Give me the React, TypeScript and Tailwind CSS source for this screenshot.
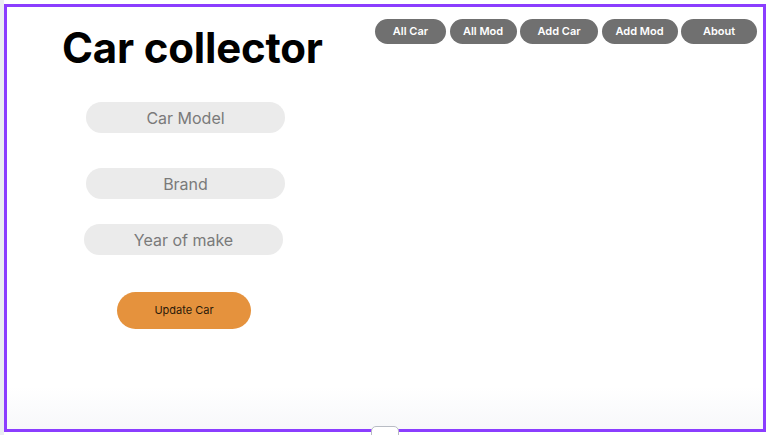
const navItems = [
  { label: "All Car", w: "w-[71px]" },
  { label: "All Mod", w: "w-[67px]" },
  { label: "Add Car", w: "w-[78px]" },
  { label: "Add Mod", w: "w-[76px]" },
  { label: "About", w: "w-[76px]" },
];

function Field({ label, offset }: { label: string; offset: string }) {
  return (
    <div
      className={`w-[199px] h-[31px] rounded-full bg-[#ebebeb] flex items-center justify-center text-[16px] text-[#7a7a7a] ${offset}`}
    >
      {label}
    </div>
  );
}

export default function App() {
  return (
    <div
      className="w-[767px] h-[435px] bg-white flex relative overflow-hidden"
      style={{ fontFamily: "Inter, 'Liberation Sans', sans-serif" }}
    >
      <div className="w-[4px] h-full bg-[#ebedf2] shrink-0" />
      <div className="mt-[4px] w-[762px] h-[428px] border-[3px] border-[#8b3dff] bg-gradient-to-b from-white from-90% to-[#f7f8fa]">
        <div className="flex justify-between">
          <div className="flex flex-col items-start">
            <h1 className="mt-[16px] ml-[55px] text-[42px] leading-[50px] font-bold text-black tracking-[-0.2px]">
              Car collector
            </h1>
            <Field label="Car Model" offset="ml-[79px] mt-[29px]" />
            <Field label="Brand" offset="ml-[79px] mt-[35px]" />
            <Field label="Year of make" offset="ml-[77px] mt-[25px]" />
            <button className="mt-[37px] ml-[110px] w-[134px] h-[37px] rounded-full bg-[#e5923d] text-[11px] text-[#2b1a0a]">
              Update Car
            </button>
          </div>
          <nav className="flex gap-[3.5px] mt-[12px] mr-[6px]">
            {navItems.map((n) => (
              <span
                key={n.label}
                className={`h-[25px] rounded-full bg-[#707070] text-white text-[11px] font-semibold flex items-center justify-center ${n.w}`}
              >
                {n.label}
              </span>
            ))}
          </nav>
        </div>
      </div>
      <div className="absolute left-[371px] top-[426px] w-[28px] h-[14px] rounded-[5px] bg-white border border-[#b8bcc4]" />
    </div>
  );
}
